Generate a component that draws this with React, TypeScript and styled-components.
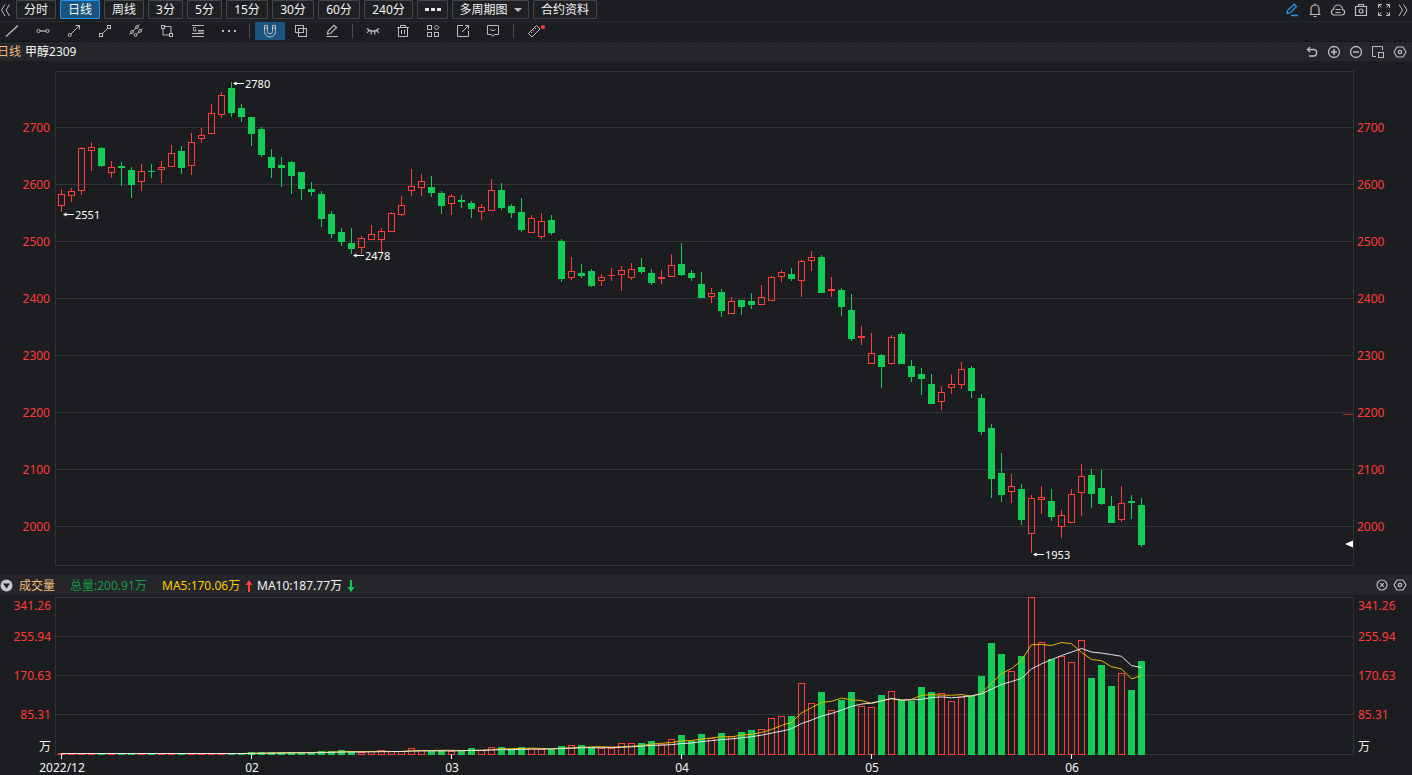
import React from 'react';
import styled, { createGlobalStyle } from 'styled-components';

const colors = {
  bg: '#1c1d20',
  bar: '#25262a',
  line: '#323337',
  red: '#ff3c38',
  green: '#11cc55',
  yellow: '#ffcc00',
  icon: '#bcbdc0',
};

const GlobalStyle = createGlobalStyle`
  *, *::before, *::after { box-sizing: border-box; }
  body {
    margin: 0;
    background: ${colors.bg};
    color: #f4f4f4;
    font: 12px/16px "Noto Sans", "Noto Sans CJK SC", sans-serif;
    overflow-x: hidden;
  }
  button { font: inherit; color: inherit; margin: 0; padding: 0; border: 0; background: none; }
`;

/* ---------- layout ---------- */

const Page = styled.main`
  min-height: 100vh;
  display: flex;
  flex-direction: column;
  overflow: hidden;
`;

const PeriodBar = styled.nav`
  display: flex;
  align-items: flex-start;
  height: 22px;
  border-bottom: 1px solid #27282c;
`;

const PeriodList = styled.div`
  display: flex;
  gap: 4px;
`;

const PeriodButton = styled.button<{ $width: number; $active?: boolean }>`
  display: flex;
  align-items: center;
  justify-content: center;
  gap: 6px;
  width: ${(p) => p.$width}px;
  height: 19px;
  line-height: 17px;
  border: 1px solid ${(p) => (p.$active ? '#2196f3' : '#45464a')};
  border-radius: 1px;
  background: ${(p) => (p.$active ? '#1a5480' : '#1f2024')};
  white-space: nowrap;
`;

const Caret = styled.span`
  border: 4px solid transparent;
  border-top-color: #c0c0c0;
  border-bottom: 0;
`;

const Dots = styled.span`
  display: flex;
  gap: 2px;
  &::before, &::after, i { content: ''; width: 4px; height: 3px; background: #e8e8e8; }
`;

const ScrollButton = styled.button`
  display: flex;
  width: 16px;
  height: 20px;
  align-items: center;
  justify-content: flex-start;
  color: ${colors.icon};
`;

const WindowTools = styled.div`
  display: flex;
  gap: 7px;
  margin-left: auto;
  padding-right: 4px;
`;

const ToolButton = styled.button<{ $accent?: boolean }>`
  display: flex;
  width: 16px;
  height: 20px;
  align-items: center;
  justify-content: center;
  color: ${(p) => (p.$accent ? '#2196f3' : colors.icon)};
`;

const DrawBar = styled.div`
  display: flex;
  align-items: flex-start;
  height: 20px;
  margin-left: -3px;
  border-bottom: 1px dashed #111214;
`;

const DrawGroup = styled.div<{ $gap?: number }>`
  display: flex;
  gap: ${(p) => p.$gap ?? 0}px;
`;

const DrawButton = styled.button<{ $active?: boolean }>`
  display: flex;
  align-items: center;
  justify-content: center;
  width: 30px;
  height: 18px;
  color: ${colors.icon};
  background: ${(p) => (p.$active ? '#1a5480' : 'transparent')};
`;

const Divider = styled.span`
  width: 1px;
  height: 14px;
  margin: 2px 5px;
  background: #4a4b4f;
`;

const PanelHeader = styled.header<{ $height: number }>`
  display: flex;
  align-items: center;
  height: ${(p) => p.$height}px;
  background: ${colors.bar};
  white-space: nowrap;
`;

const ContractTitle = styled.h1`
  display: flex;
  gap: 4px;
  margin: 0 0 0 -3px;
  font-size: 12px;
  font-weight: 400;
`;

const Amber = styled.span`
  color: #f3bb7c;
`;

const HeaderTools = styled.div<{ $gap: number }>`
  display: flex;
  gap: ${(p) => p.$gap}px;
  margin-left: auto;
  padding-right: 4px;
`;

const Plot = styled.section<{ $height: number }>`
  display: grid;
  grid-template-columns: 55px minmax(0, 1fr) 58px;
  grid-template-rows: ${(p) => p.$height}px;
`;

const Axis = styled.div<{ $right?: boolean; $top: number; $pad: number }>`
  padding: ${(p) => p.$top}px ${(p) => p.$pad}px 0;
  text-align: ${(p) => (p.$right ? 'left' : 'right')};
  color: ${colors.red};
`;

const AxisLabel = styled.div<{ $height: number; $unit?: boolean }>`
  height: ${(p) => p.$height}px;
  line-height: ${(p) => p.$height}px;
  color: ${(p) => (p.$unit ? '#f4f4f4' : 'inherit')};
`;

const Frame = styled.div<{ $height: number; $top: number }>`
  height: ${(p) => p.$height}px;
  margin-top: ${(p) => p.$top}px;
  border: 1px solid ${colors.line};
`;

const Canvas = styled.svg`
  display: block;
  width: 100%;
  height: 100%;
  overflow: visible;
`;

const DateAxis = styled.div`
  height: 20px;
  padding-left: 56px;
`;

const Collapse = styled.button`
  display: flex;
  width: 19px;
  height: 20px;
  align-items: center;
`;

const Legend = styled.dl`
  display: flex;
  margin: 0;
  padding-top: 1px;
`;

const LegendItem = styled.div<{ $color: string; $width: number }>`
  display: flex;
  align-items: center;
  width: ${(p) => p.$width}px;
  color: ${(p) => p.$color};
  dt, dd { margin: 0; }
  svg { display: block; margin-left: 5px; }
`;

const IconSvg = styled.svg`
  display: block;
  overflow: visible;
`;

/* ---------- icons ---------- */

const iconPaths: Record<string, React.ReactNode> = {
  line: <path d="M2 13.500 14 2.500" strokeWidth="1.300" />,
  hline: <><circle cx="3.500" cy="8" r="1.600" /><circle cx="12.500" cy="8" r="1.600" /><path d="M5 8h6" strokeWidth="1.300" /></>,
  arrow: <><circle cx="3.700" cy="12" r="1.500" /><path d="M5 11 13.500 2.500M9.500 2.500h4V6.500" /></>,
  segment: <><rect x="2.500" y="10.500" width="3" height="3" /><rect x="10.500" y="2.500" width="3" height="3" /><path d="m5.500 10.500 5-5" /></>,
  channel: <><circle cx="4" cy="9" r="1.400" /><circle cx="9" cy="4" r="1.400" /><circle cx="7.500" cy="12" r="1.400" /><circle cx="12" cy="8" r="1.400" /><path d="m5 8 3-3M10 3l1.500-1.500M8.500 11l2.500-2M13 7l1.500-1.500M3 10l-1.500 1.500" /></>,
  rect: <><rect x="2.500" y="2.500" width="3" height="3" /><rect x="10.500" y="10.500" width="3" height="3" /><path d="M5.500 3.500h6.500v7M4 5.500v6.500h6.500" /></>,
  fib: <><path d="M2 2.500h12M2 13.500h12M8 7.500h6M2 10.500h12" /><path d="M6 4.500H3.500v3.500h2.500V6.500H5" strokeWidth=".8" /><path d="M8 9h6" strokeWidth="2" opacity=".4" /></>,
  more: <g fill="currentColor" stroke="none"><rect x="1" y="7" width="2" height="2" /><rect x="7" y="7" width="2" height="2" /><rect x="13" y="7" width="2" height="2" /></g>,
  magnet: <path d="M2.500 2.500h3v6a2.500 2.500 0 0 0 5 0v-6h3v6a5.500 5.500 0 0 1-11 0zM2.500 5h3M10.500 5h3" />,
  copy: <><rect x="2.500" y="2.500" width="8" height="7" /><rect x="5.500" y="5.500" width="8" height="8" /></>,
  pen: <path d="m3 11.500.5-3L10.200 2.200 12.500 4.500 6 11zM7 13.500h7" strokeWidth="1.300" />,
  edit: <><path d="m3.500 11 .5-3L10 2.200 12.500 4.500 6.500 10.500z" strokeWidth="1.200" /><path d="M2.500 13.500h11.500" /></>,
  eye: <path d="M2 5.500c3 3.500 9 3.500 12 0M4 7.500l-2 2.500M6.500 8.500l-.5 3M9.500 8.500l.5 3M12 7.500l2 2.500" strokeWidth="1.200" />,
  trash: <path d="M2 4.500h12M5.500 4.500v-2h5v2M3.500 4.500v9h9v-9M6.500 7v4M9.500 7v4" />,
  grid: <><rect x="2.500" y="2.500" width="4" height="4" /><rect x="2.500" y="9.500" width="4" height="4" /><rect x="9.500" y="9.500" width="4" height="4" /><path d="m11.500 2 2.500 2.500L11.500 7 9 4.500z" /></>,
  share: <path d="M8 2.500H2.500v11h11V8M7 9l6.500-6.500M10 2.500h3.500V6" />,
  comment: <path d="M2.500 2.500h11v9h-4L8 13.500 6.500 11.500h-4zM5.500 6.500q2.500 2.500 5 0" />,
  ruler: <><path d="M10.500 2.500 14 6l-8 8-3.500-3.500zM4.500 8.500l1.500 1.500M6.500 6.500 8 8M8.500 4.500 10 6" /><circle cx="17" cy="4" r="2" fill={colors.red} stroke="none" /></>,
  bell: <path d="M2.500 12.500h11M4 12.500V7a4 4 0 0 1 8 0v5.500M8 1.500V3M6.500 14.500h3" strokeWidth="1.200" />,
  cloud: <path d="M4 13a2.800 2.800 0 0 1-.5-5.500 4.500 4.500 0 0 1 9 0A2.800 2.800 0 0 1 12 13zM5.500 7.500h5M5.500 10.500h5" strokeWidth="1.200" />,
  camera: <><path d="M2.500 4.500h11v9h-11zM5.500 4.500v-2h5v2" strokeWidth="1.200" /><circle cx="8" cy="9" r="2" strokeWidth="1.200" /></>,
  expand: <path d="M2.500 6V2.500H6M10 2.500h3.500V6M13.500 10v3.500H10M6 13.500H2.500V10M2.500 2.500l3 3M13.500 2.500l-3 3M2.500 13.500l3-3M13.500 13.500l-3-3" />,
  prev: <path d="M5 2.500 1.500 8 5 14M9.500 2.500 6 8l3.500 6" />,
  next: <path d="m3 2.500 3.500 5.500L3 14M7.500 2.500 11 8l-3.500 6" />,
  undo: <path d="M6 3 3.500 5.500 6 8M3.500 5.500h6.500a3.300 3.300 0 0 1 0 6.500H5" strokeWidth="1.300" />,
  plus: <><circle cx="8" cy="8" r="5.500" strokeWidth="1.300" /><path d="M5 8h6M8 5v6" strokeWidth="1.500" /></>,
  minus: <><circle cx="8" cy="8" r="5.500" strokeWidth="1.300" /><path d="M5 8h6" strokeWidth="1.500" /></>,
  popout: <><path d="M6 12.500H2.500v-10h10V6" /><rect x="8.500" y="8.500" width="5" height="5" /></>,
  settings: <><path d="M5 3h6l3 5-3 5H5L2 8z" strokeLinejoin="round" strokeWidth="1.200" /><circle cx="8" cy="8" r="1.700" strokeWidth="1.300" /></>,
  close: <><circle cx="8" cy="8" r="5" strokeWidth="1.200" /><path d="m6.200 6.200 3.600 3.600M9.800 6.200 6.200 9.800" strokeWidth="1.200" /></>,
};

const Icon = ({ name }: { name: string }) => (
  <IconSvg width="16" height="16" viewBox="0 0 16 16" fill="none" stroke="currentColor" aria-hidden="true">
    {iconPaths[name]}
  </IconSvg>
);

/* ---------- data ---------- */

type Candle = [kind: 'R' | 'G', high: number, top: number, bottom: number, low: number, volumeTop: number];

// Screen rows of each trading day: wick top, body top, body bottom, wick bottom, volume bar top.
const candles: Candle[] = [
  ['R',189,194,206,212,753],['R',188,191,196,202,753],['R',147,148,191,195,753],['R',142,147,151,171,753],
  ['G',147,148,166,167,753],['R',161,167,173,178,753],['G',162,166,168,186,753],['G',167,170,185,198,753],
  ['R',164,171,182,191,753],['G',164,171,172,178,753],['R',161,167,170,183,753],['R',145,153,167,167,753],
  ['G',146,151,168,174,753],['R',133,142,166,175,753],['R',128,135,139,143,753],['R',104,113,134,134,753],
  ['R',92,95,115,118,753],['G',82,88,113,117,753],['G',104,108,117,122,753],['G',117,117,134,146,752],
  ['G',127,129,155,157,752],['G',149,157,168,178,752],['G',157,165,168,187,752],['G',161,162,176,194,752],
  ['G',172,172,189,200,752],['G',182,189,192,196,752],['G',191,194,219,227,751],['G',211,214,234,238,751],
  ['G',228,232,242,246,750],['G',228,243,249,254,751],['R',236,238,248,254,752],['R',225,234,240,240,751],
  ['R',228,231,240,252,750],['R',212,213,232,232,751],['R',196,205,215,216,751],['R',169,186,191,196,748],
  ['R',174,181,188,196,750],['G',176,187,193,197,750],['G',191,193,206,214,750],['R',194,196,204,215,751],
  ['G',195,200,202,208,750],['G',201,203,209,218,748],['R',204,207,212,220,750],['R',179,190,211,211,747],
  ['G',183,190,208,210,747],['G',204,206,213,218,749],['G',198,212,230,232,747],['R',215,218,233,233,748],
  ['R',213,221,237,239,749],['G',215,220,233,235,749],['G',239,241,279,282,746],['R',257,271,278,280,745],
  ['G',264,273,276,278,745],['G',269,271,286,287,747],['R',274,277,281,286,748],['R',268,275,276,281,748],
  ['R',266,270,275,291,743],['R',263,269,278,280,743],['G',258,267,272,274,743],['G',269,273,283,285,741],
  ['R',270,277,279,284,744],['R',254,265,277,277,739],['G',243,264,275,276,735],['G',270,273,278,281,741],
  ['G',272,284,298,298,734],['R',288,293,297,303,738],['G',289,292,311,317,733],['R',297,301,314,314,736],
  ['G',300,300,307,315,732],['G',293,301,305,309,730],['R',285,297,305,305,729],['R',276,277,301,301,718],
  ['R',270,272,277,282,716],['G',268,274,279,281,716],['R',260,261,281,297,683],['R',251,257,261,271,703],
  ['G',255,257,293,293,692],['R',277,289,291,297,710],['G',288,290,307,316,700],['G',294,310,339,341,692],
  ['R',326,336,338,345,706],['R',333,353,364,364,707],['G',354,355,367,388,695],['R',335,337,364,365,691],
  ['G',332,334,364,364,700],['G',360,366,377,382,701],['G',368,374,379,395,687],['G',374,384,404,404,692],
  ['R',386,392,402,410,693],['R',374,384,388,394,701],['R',362,369,385,389,697],['G',366,368,391,398,696],
  ['G',394,398,432,435,676],['G',424,428,479,498,643],['G',453,473,495,502,654],['R',474,486,492,503,671],
  ['G',484,489,520,525,656],['R',495,498,534,553,597],['R',486,497,500,514,642],['G',489,501,517,521,659],
  ['R',510,515,527,538,656],['R',489,494,523,523,662],['R',464,476,493,516,640],['G',469,475,494,508,678],
  ['G',470,488,504,505,665],['G',496,506,523,523,686],['R',486,503,520,522,673],['G',495,501,503,519,690],
  ['G',498,505,545,547,661],
];

const PRICE_TOP = 72;
const VOLUME_TOP = 598;
const VOLUME_BASE = 755;
const STEP = 10;

const left = (i: number) => 2 + i * STEP;
const mid = (i: number) => left(i) + 3;

const movingAverage = (span: number) =>
  candles
    .map((_, i) => {
      const part = candles.slice(Math.max(0, i - span + 1), i + 1);
      const mean = part.reduce((sum, c) => sum + c[5], 0) / part.length;
      return `${mid(i) + 0.5},${(mean - VOLUME_TOP + 0.5).toFixed(1)}`;
    })
    .join(' ');

const prices = [2700, 2600, 2500, 2400, 2300, 2200, 2100, 2000];
const volumes = [
  { text: '341.26', height: 20 },
  { text: '255.94', height: 41 },
  { text: '170.63', height: 38 },
  { text: '85.31', height: 40 },
];

const notes = [
  { text: '2780', day: 17, y: 84 },
  { text: '2551', day: 0, y: 215 },
  { text: '2478', day: 29, y: 256 },
  { text: '1953', day: 97, y: 555 },
];

const dates = [
  { text: '2022/12', day: 0 },
  { text: '02', day: 19 },
  { text: '03', day: 39 },
  { text: '04', day: 62 },
  { text: '05', day: 81 },
  { text: '06', day: 101 },
];

const periods: { text: string; width: number; active?: boolean }[] = [
  { text: '分时', width: 40 },
  { text: '日线', width: 40, active: true },
  { text: '周线', width: 40 },
  { text: '3分', width: 35 },
  { text: '5分', width: 35 },
  { text: '15分', width: 42 },
  { text: '30分', width: 42 },
  { text: '60分', width: 42 },
  { text: '240分', width: 49 },
];

/* ---------- chart parts ---------- */

const Bar = ({ x, y, height, kind }: { x: number; y: number; height: number; kind: 'R' | 'G' }) =>
  kind === 'G' || height < 3 ? (
    <rect x={x} y={y} width={7} height={height} fill={kind === 'G' ? colors.green : colors.red} />
  ) : (
    <rect x={x + 0.5} y={y + 0.5} width={6} height={height - 1} fill="none" stroke={colors.red} />
  );

const GridLine = ({ y }: { y: number }) => (
  <rect x="0" y={y} width="100%" height="1" fill={colors.line} />
);

const PriceChart = () => (
  <Canvas role="img" aria-label="甲醇2309 日线">
    {prices.map((p, i) => <GridLine key={p} y={55 + i * 57} />)}
    {candles.map(([kind, high, top, bottom, low], i) => {
      const fill = kind === 'G' ? colors.green : colors.red;
      return (
        <g key={i}>
          <rect x={mid(i)} y={high - PRICE_TOP} width={1} height={top - high} fill={fill} />
          <rect x={mid(i)} y={bottom - PRICE_TOP} width={1} height={low - bottom} fill={fill} />
          <Bar x={left(i)} y={top - PRICE_TOP} height={bottom - top} kind={kind} />
        </g>
      );
    })}
    {notes.map(({ text, day, y }) => (
      <g key={text} transform={`translate(${mid(day)} ${y - PRICE_TOP})`} fill="#ffffff">
        <path d="M2 -.5 5.500 -2.500V1.500zM4 -1h9v1H4z" />
        <text x="14" y="4" fontSize="11">{text}</text>
      </g>
    ))}
    <svg x="100%" y="0" overflow="visible">
      <rect x="-10" y="342" width="10" height="1" fill="#b02c2c" />
      <path d="M-8 472 0 468.500v7z" fill="#fff" />
    </svg>
  </Canvas>
);

const VolumeChart = () => (
  <Canvas role="img" aria-label="成交量">
    {[38, 77, 116].map((y) => <GridLine key={y} y={y} />)}
    {candles.map(([kind, , , , , top], i) => (
      <Bar key={i} x={left(i)} y={top - VOLUME_TOP} height={VOLUME_BASE - top} kind={kind} />
    ))}
    <polyline points={movingAverage(5)} fill="none" stroke="#e6b800" />
    <polyline points={movingAverage(10)} fill="none" stroke="#e8e8e8" />
  </Canvas>
);

const PriceAxis = ({ right }: { right?: boolean }) => (
  <Axis $right={right} $top={38} $pad={right ? 3 : 5}>
    {prices.map((p) => <AxisLabel key={p} $height={57}>{p}</AxisLabel>)}
  </Axis>
);

const VolumeAxis = ({ right }: { right?: boolean }) => (
  <Axis $right={right} $top={1} $pad={4}>
    {volumes.map((v) => <AxisLabel key={v.text} $height={v.height}>{v.text}</AxisLabel>)}
    <AxisLabel $height={24} $unit>万</AxisLabel>
  </Axis>
);

const Arrow = ({ up }: { up?: boolean }) => (
  <svg width="8" height="12" viewBox="0 0 8 12" aria-hidden="true">
    <path
      d={up ? 'M4 0 7.500 5H5v7H3V5H.5z' : 'M4 12 .5 7H3V0h2v7h2.500z'}
      fill={up ? colors.red : colors.green}
    />
  </svg>
);

const toolButtons = (names: [string, string][]) =>
  names.map(([name, label]) => (
    <ToolButton key={name} aria-label={label} $accent={name === 'pen'}>
      <Icon name={name} />
    </ToolButton>
  ));

const drawButtons = (names: [string, string][]) =>
  names.map(([name, label]) => (
    <DrawButton key={name} aria-label={label} $active={name === 'magnet'}>
      <Icon name={name} />
    </DrawButton>
  ));

export default function App() {
  return (
    <Page>
      <GlobalStyle />
      <PeriodBar>
        <ScrollButton aria-label="向左"><Icon name="prev" /></ScrollButton>
        <PeriodList>
          {periods.map((p) => (
            <PeriodButton key={p.text} $width={p.width} $active={p.active}>{p.text}</PeriodButton>
          ))}
          <PeriodButton $width={31} aria-label="更多周期"><Dots><i /></Dots></PeriodButton>
          <PeriodButton $width={77}>多周期图<Caret /></PeriodButton>
          <PeriodButton $width={64}>合约资料</PeriodButton>
        </PeriodList>
        <WindowTools>
          {toolButtons([['pen', '画线'], ['bell', '预警'], ['cloud', '云'], ['camera', '截图'], ['expand', '全屏']])}
        </WindowTools>
        <ScrollButton aria-label="向右"><Icon name="next" /></ScrollButton>
      </PeriodBar>

      <DrawBar>
        <DrawGroup $gap={1}>
          {drawButtons([['line', '直线'], ['hline', '水平线'], ['arrow', '射线'], ['segment', '线段'], ['channel', '平行线'], ['rect', '矩形'], ['fib', '黄金分割'], ['more', '更多']])}
        </DrawGroup>
        <Divider />
        <DrawGroup $gap={1}>
          {drawButtons([['magnet', '磁吸'], ['copy', '连续画线'], ['edit', '编辑']])}
        </DrawGroup>
        <Divider />
        <DrawGroup>
          {drawButtons([['eye', '隐藏'], ['trash', '删除'], ['grid', '管理'], ['share', '分享'], ['comment', '反馈']])}
        </DrawGroup>
        <Divider />
        <DrawGroup>{drawButtons([['ruler', '测量']])}</DrawGroup>
      </DrawBar>

      <PanelHeader $height={19}>
        <ContractTitle><Amber>日线</Amber><span>甲醇2309</span></ContractTitle>
        <HeaderTools $gap={6}>
          {toolButtons([['undo', '撤销'], ['plus', '放大'], ['minus', '缩小'], ['popout', '弹出'], ['settings', '设置']])}
        </HeaderTools>
      </PanelHeader>
      <Plot $height={514}>
        <PriceAxis />
        <Frame $height={495} $top={10}><PriceChart /></Frame>
        <PriceAxis right />
      </Plot>

      <PanelHeader $height={20}>
        <Collapse aria-label="收起">
          <svg width="13" height="13" viewBox="0 0 13 13" aria-hidden="true">
            <circle cx="6.500" cy="6.500" r="6" fill="#c6c7ca" />
            <path d="M3 4.500h7L6.500 9.500z" fill="#1c1d20" />
          </svg>
        </Collapse>
        <Legend>
          <LegendItem $color="#f3bb7c" $width={51}><dt>成交量</dt></LegendItem>
          <LegendItem $color="#0f9d42" $width={92}><dt>总量:</dt><dd>200.91万</dd></LegendItem>
          <LegendItem $color={colors.yellow} $width={95}><dt>MA5:</dt><dd>170.06万</dd><dd><Arrow up /></dd></LegendItem>
          <LegendItem $color="#f4f4f4" $width={102}><dt>MA10:</dt><dd>187.77万</dd><dd><Arrow /></dd></LegendItem>
        </Legend>
        <HeaderTools $gap={2}>{toolButtons([['close', '关闭'], ['settings', '设置']])}</HeaderTools>
      </PanelHeader>
      <Plot $height={160}>
        <VolumeAxis />
        <Frame $height={158} $top={2}><VolumeChart /></Frame>
        <VolumeAxis right />
      </Plot>
      <DateAxis>
        <Canvas role="img" aria-label="日期">
          {dates.map(({ text, day }) => (
            <g key={text} fill="#f4f4f4">
              <rect x={mid(day)} y="-1" width="1" height="5" />
              <text x={mid(day) + 1} y="17" fontSize="12" textAnchor="middle">{text}</text>
            </g>
          ))}
        </Canvas>
      </DateAxis>
    </Page>
  );
}
